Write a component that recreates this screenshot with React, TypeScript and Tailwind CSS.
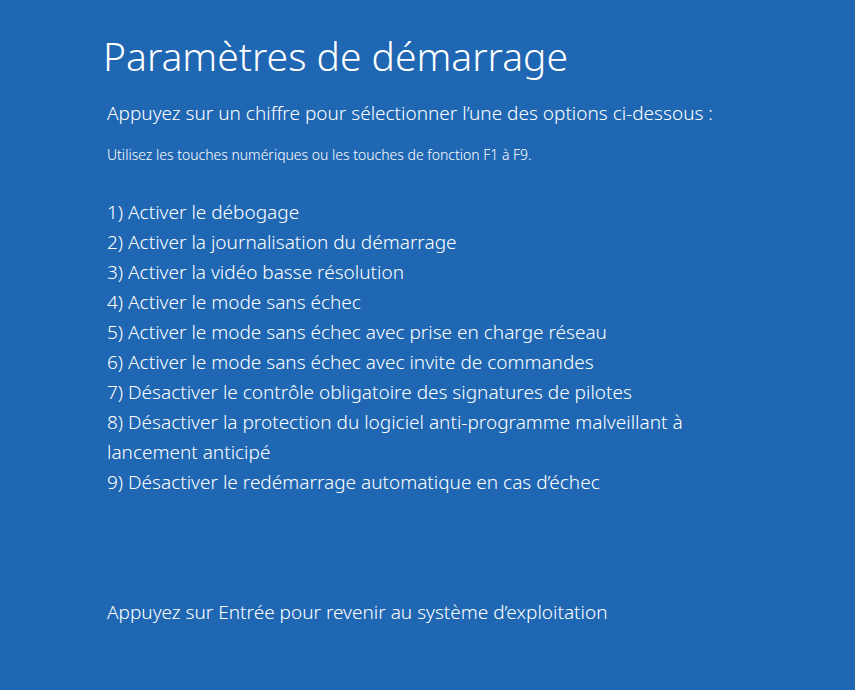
const options = [
  "Activer le débogage",
  "Activer la journalisation du démarrage",
  "Activer la vidéo basse résolution",
  "Activer le mode sans échec",
  "Activer le mode sans échec avec prise en charge réseau",
  "Activer le mode sans échec avec invite de commandes",
  "Désactiver le contrôle obligatoire des signatures de pilotes",
  "Désactiver la protection du logiciel anti-programme malveillant à lancement anticipé",
  "Désactiver le redémarrage automatique en cas d’échec",
];

export default function App() {
  return (
    <main className="min-h-screen bg-[#1f67b3] pt-7 pr-[120px] pb-12 pl-[107px] font-['Noto_Sans','Open_Sans',sans-serif] text-[19px] leading-[30px] font-light text-white">
      <h1 className="-ml-1 text-[39px] leading-[56px] font-light">Paramètres de démarrage</h1>
      <p className="mt-[14px]">Appuyez sur un chiffre pour sélectionner l’une des options ci-dessous :</p>
      <p className="mt-[17px] text-[14px] leading-5">
        Utilisez les touches numériques ou les touches de fonction F1 à F9.
      </p>
      <ol className="mt-8">
        {options.map((option, i) => (
          <li key={option}>{`${i + 1}) ${option}`}</li>
        ))}
      </ol>
      <p className="mt-[100px]">Appuyez sur Entrée pour revenir au système d’exploitation</p>
    </main>
  );
}
